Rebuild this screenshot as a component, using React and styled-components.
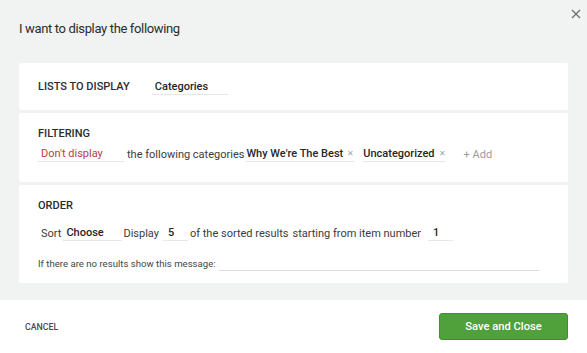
import React from "react";
import styled, { createGlobalStyle } from "styled-components";

const Global = createGlobalStyle`
  html, body { margin: 0; padding: 0; }
  body { font-family: Roboto, "Liberation Sans", sans-serif; color: #2f3033; background: #fff; }
  * { box-sizing: border-box; }
`;

const Modal = styled.div`
  width: 587px;
  height: 353px;
  display: flex;
  flex-direction: column;
  position: relative;
`;

const Body = styled.div`
  background: #f1f2f2;
  padding: 0 19px 16px 19px;
  display: flex;
  flex-direction: column;
  height: 300px;
`;

const Title = styled.h1`
  margin: 0;
  font-size: 13px;
  letter-spacing: -0.35px;
  font-weight: 400;
  height: 63px;
  padding-top: 20px;
  line-height: 17px;
  color: #2b2c2e;
`;

const Close = styled.button`
  position: absolute;
  top: 9px;
  right: 6px;
  width: 10px;
  height: 10px;
  padding: 0;
  border: 0;
  background: none;
  display: flex;
`;

const Cards = styled.div`
  display: flex;
  flex-direction: column;
  gap: 3px;
`;

const Card = styled.section`
  background: #fff;
  border-radius: 2px;
  height: ${(p) => p.$h}px;
  padding: ${(p) => p.$pt}px 19px 0 19px;
  display: flex;
  font-size: 11px;
  flex-direction: ${(p) => (p.$row ? "row" : "column")};
  align-items: ${(p) => (p.$row ? "center" : "stretch")};
`;

const Heading = styled.div`
  font-size: 11px;
  font-weight: 500;
  color: #2b2c2e;
  line-height: 13px;
  margin-right: ${(p) => p.$mr || 0}px;
`;

const Row = styled.div`
  display: flex;
  align-items: center;
  font-size: 11px;
  color: #3a3b3e;
  margin-top: ${(p) => p.$mt || 0}px;
  margin-left: ${(p) => p.$ml || 0}px;
  height: 16px;
`;

const Field = styled.span`
  display: inline-flex;
  align-items: center;
  width: ${(p) => p.$w}px;
  height: 16px;
  font-size: 11px;
  padding-left: ${(p) => p.$pl ?? 3}px;
  border-bottom: 1px solid #e6e7e8;
  font-weight: ${(p) => (p.$plain ? 400 : 500)};
  color: ${(p) => p.$color || "#26272a"};
  margin-right: ${(p) => p.$mr ?? 3}px;
  margin-left: ${(p) => p.$ml ?? 0}px;
  white-space: nowrap;
`;

const Text = styled.span`
  white-space: nowrap;
  margin-right: ${(p) => p.$mr ?? 4}px;
`;

const Tag = styled.span`
  display: inline-flex;
  align-items: center;
  height: 16px;
  padding: 0;
  border-bottom: 1px solid #e6e7e8;
  font-weight: 500;
  color: #26272a;
  margin-right: ${(p) => p.$mr ?? 9}px;
  white-space: nowrap;
`;

const TagX = styled.span`
  font-size: 8px;
  color: #a4a6aa;
  margin-left: 4px;
  font-weight: 400;
`;

const Add = styled.span`
  color: #9a9ca0;
  margin-left: 18px;
`;

const Small = styled.span`
  font-size: 9.6px;
  color: #45464a;
  white-space: nowrap;
  margin-right: 3px;
`;

const Line = styled.span`
  width: 320px;
  height: 16px;
  border-bottom: 1px solid #dcdddf;
`;

const Footer = styled.footer`
  flex: 1;
  background: #fff;
  display: flex;
  align-items: center;
  justify-content: space-between;
  padding: 0 19px 0 25px;
`;

const Cancel = styled.button`
  border: 0;
  background: none;
  padding: 0;
  font-family: inherit;
  font-size: 8.8px;
  font-weight: 500;
  color: #4a4b4e;
`;

const Save = styled.button`
  width: 129px;
  height: 27px;
  border: 1px solid #3f8f2c;
  border-radius: 3px;
  background: #50a03b;
  color: #fff;
  font-family: inherit;
  font-size: 11.2px;
  font-weight: 500;
  margin-top: -1px;
`;

export default function App() {
  return (
    <Modal>
      <Global />
      <Close aria-label="Close">
        <svg width="10" height="10" viewBox="0 0 10 10">
          <path d="M1 1L9 9M9 1L1 9" stroke="#6b6e73" strokeWidth="1.2" />
        </svg>
      </Close>
      <Body>
        <Title>I want to display the following</Title>
        <Cards>
          <Card $h={47} $pt={0} $row>
            <Heading $mr={22}>LISTS TO DISPLAY</Heading>
            <Field $w={76}>Categories</Field>
          </Card>
          <Card $h={69} $pt={14}>
            <Heading>FILTERING</Heading>
            <Row $mt={6}>
              <Field $w={86} $color="#b5423f" $plain $mr={3}>Don't display</Field>
              <Text $mr={2}>the following categories</Text>
              <Tag>
                Why We're The Best<TagX>✕</TagX>
              </Tag>
              <Tag $mr={0}>
                Uncategorized<TagX>✕</TagX>
              </Tag>
              <Add>+ Add</Add>
            </Row>
          </Card>
          <Card $h={98} $pt={14}>
            <Heading>ORDER</Heading>
            <Row $mt={13} $ml={3}>
              <Text $mr={2}>Sort</Text>
              <Field $w={59} $mr={1}>Choose</Field>
              <Text $mr={4}>Display</Text>
              <Field $w={25} $pl={5} $mr={2}>5</Field>
              <Text>of the sorted results</Text>
              <Text $mr={7}>starting from item number</Text>
              <Field $w={25} $pl={5}>1</Field>
            </Row>
            <Row $mt={14}>
              <Small>If there are no results show this message:</Small>
              <Line />
            </Row>
          </Card>
        </Cards>
      </Body>
      <Footer>
        <Cancel>CANCEL</Cancel>
        <Save>Save and Close</Save>
      </Footer>
    </Modal>
  );
}
